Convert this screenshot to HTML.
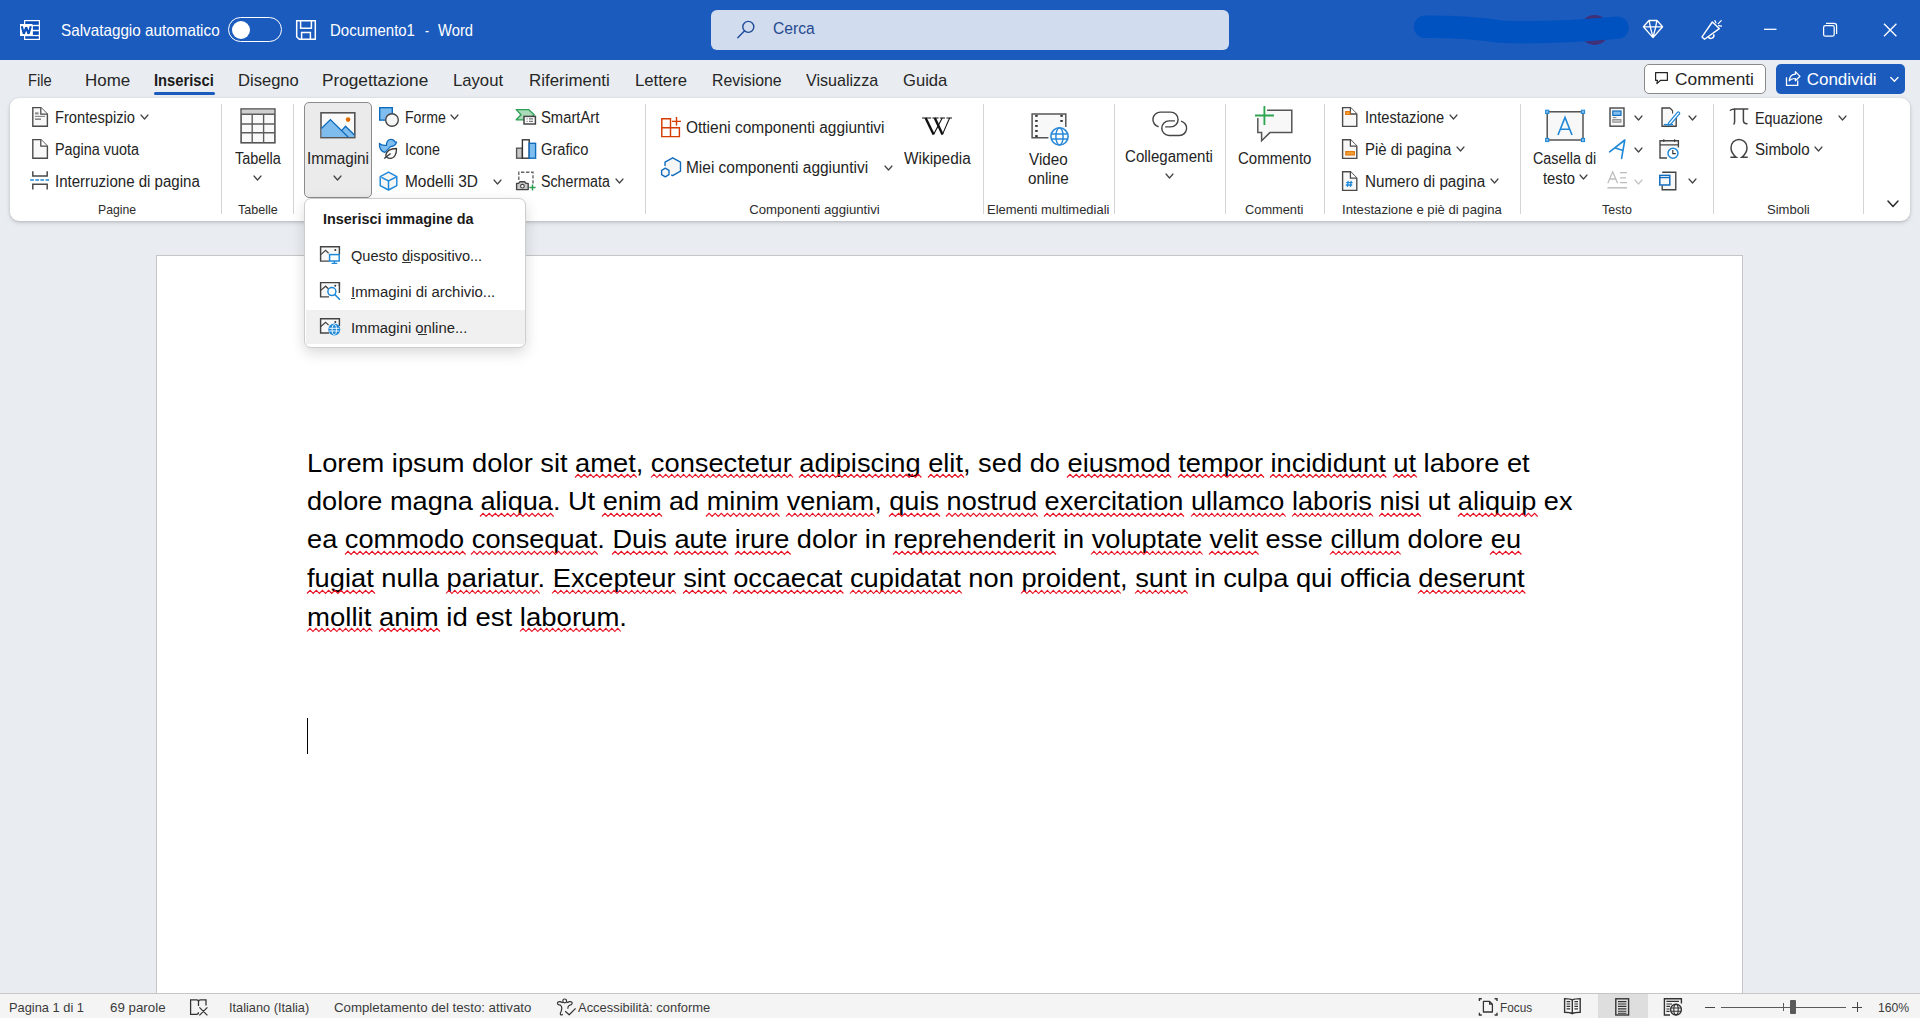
<!DOCTYPE html><html><head><meta charset="utf-8"><style>
html,body{margin:0;padding:0;width:1920px;height:1018px;overflow:hidden;background:#e9edf1}
body{position:relative;font-family:"Liberation Sans",sans-serif}
.t{position:absolute;white-space:pre;line-height:1;transform-origin:0 0}
svg{overflow:visible}
</style></head><body>
<div style="position:absolute;left:0px;top:0px;width:1920px;height:60px;background:#1b5bbe"></div>
<div style="position:absolute;left:0px;top:60px;width:1920px;height:933px;background:#e9edf1"></div>
<div style="position:absolute;left:156px;top:255px;width:1587px;height:760px;background:#fff;border:1px solid #c6c6c6;border-bottom:none;box-sizing:border-box"></div>
<div style="position:absolute;left:10px;top:98px;width:1900px;height:123px;background:#fff;border-radius:9px;box-shadow:0 1px 3px rgba(0,0,0,0.18),0 2px 6px rgba(0,0,0,0.08)"></div>
<div style="position:absolute;left:0px;top:993px;width:1920px;height:25px;background:#f4f4f4;border-top:1px solid #c8c6c4;box-sizing:border-box"></div>
<div class="t" style="left:61.00px;top:22.23px;font-size:16.5px;color:#ffffff;transform:scaleX(0.9248);">Salvataggio automatico</div>
<div class="t" style="left:330.00px;top:22.03px;font-size:16.5px;color:#ffffff;transform:scaleX(0.9081);">Documento1</div>
<div class="t" style="left:425.00px;top:22.03px;font-size:16.5px;color:#ffffff;transform:scaleX(0.7273);">-</div>
<div class="t" style="left:438.00px;top:22.03px;font-size:16.5px;color:#ffffff;transform:scaleX(0.8951);">Word</div>
<div style="position:absolute;left:228px;top:17px;width:54px;height:25px;border:1.5px solid #fff;border-radius:13px;box-sizing:border-box"></div>
<div style="position:absolute;left:232px;top:20.5px;width:18px;height:18px;background:#fff;border-radius:50%"></div>
<div style="position:absolute;left:711px;top:10px;width:518px;height:40px;background:#d1dcee;border-radius:6px"></div>
<div class="t" style="left:772.50px;top:21.28px;font-size:16.8px;color:#24498f;transform:scaleX(0.9310);">Cerca</div>
<div class="t" style="left:27.60px;top:72.21px;font-size:17px;color:#262626;transform:scaleX(0.8631);">File</div>
<div class="t" style="left:84.60px;top:72.21px;font-size:17px;color:#262626;transform:scaleX(0.9956);">Home</div>
<div class="t" style="left:154.20px;top:72.21px;font-size:17px;color:#1a1a1a;transform:scaleX(0.8667);font-weight:bold;">Inserisci</div>
<div class="t" style="left:237.50px;top:72.21px;font-size:17px;color:#262626;transform:scaleX(0.9744);">Disegno</div>
<div class="t" style="left:322.30px;top:72.21px;font-size:17px;color:#262626;transform:scaleX(1.0124);">Progettazione</div>
<div class="t" style="left:452.50px;top:72.21px;font-size:17px;color:#262626;transform:scaleX(0.9804);">Layout</div>
<div class="t" style="left:528.70px;top:72.21px;font-size:17px;color:#262626;transform:scaleX(0.9938);">Riferimenti</div>
<div class="t" style="left:634.60px;top:72.21px;font-size:17px;color:#262626;transform:scaleX(0.9830);">Lettere</div>
<div class="t" style="left:711.60px;top:72.21px;font-size:17px;color:#262626;transform:scaleX(0.9330);">Revisione</div>
<div class="t" style="left:806.40px;top:72.21px;font-size:17px;color:#262626;transform:scaleX(0.9463);">Visualizza</div>
<div class="t" style="left:903.00px;top:72.21px;font-size:17px;color:#262626;transform:scaleX(0.9780);">Guida</div>
<div style="position:absolute;left:154px;top:92px;width:61px;height:3px;background:#1b5bbe;border-radius:2px"></div>
<div style="position:absolute;left:1644px;top:64px;width:122px;height:30px;background:#fff;border:1px solid #8a8a8a;border-radius:5px;box-sizing:border-box"></div>
<div class="t" style="left:1674.60px;top:71.41px;font-size:17px;color:#242424;transform:scaleX(1.0194);">Commenti</div>
<div style="position:absolute;left:1776px;top:64px;width:129px;height:30px;background:#1b5bbe;border-radius:5px"></div>
<div class="t" style="left:1806.70px;top:71.41px;font-size:17px;color:#ffffff;">Condividi</div>
<div style="position:absolute;left:221px;top:104px;width:1px;height:110px;background:#d4d4d4"></div>
<div style="position:absolute;left:293px;top:104px;width:1px;height:110px;background:#d4d4d4"></div>
<div style="position:absolute;left:645px;top:104px;width:1px;height:110px;background:#d4d4d4"></div>
<div style="position:absolute;left:983px;top:104px;width:1px;height:110px;background:#d4d4d4"></div>
<div style="position:absolute;left:1114px;top:104px;width:1px;height:110px;background:#d4d4d4"></div>
<div style="position:absolute;left:1225px;top:104px;width:1px;height:110px;background:#d4d4d4"></div>
<div style="position:absolute;left:1324px;top:104px;width:1px;height:110px;background:#d4d4d4"></div>
<div style="position:absolute;left:1520px;top:104px;width:1px;height:110px;background:#d4d4d4"></div>
<div style="position:absolute;left:1713px;top:104px;width:1px;height:110px;background:#d4d4d4"></div>
<div style="position:absolute;left:1863px;top:104px;width:1px;height:110px;background:#d4d4d4"></div>
<div class="t" style="left:98.40px;top:202.93px;font-size:13.2px;color:#2c2c2c;transform:scaleX(0.9270);">Pagine</div>
<div class="t" style="left:237.80px;top:202.93px;font-size:13.2px;color:#2c2c2c;transform:scaleX(0.9498);">Tabelle</div>
<div class="t" style="left:749.20px;top:202.93px;font-size:13.2px;color:#2c2c2c;">Componenti aggiuntivi</div>
<div class="t" style="left:987.30px;top:202.93px;font-size:13.2px;color:#2c2c2c;transform:scaleX(0.9824);">Elementi multimediali</div>
<div class="t" style="left:1245.20px;top:202.93px;font-size:13.2px;color:#2c2c2c;transform:scaleX(0.9717);">Commenti</div>
<div class="t" style="left:1342.30px;top:202.93px;font-size:13.2px;color:#2c2c2c;transform:scaleX(0.9950);">Intestazione e piè di pagina</div>
<div class="t" style="left:1601.70px;top:202.93px;font-size:13.2px;color:#2c2c2c;transform:scaleX(0.9460);">Testo</div>
<div class="t" style="left:1767.00px;top:202.93px;font-size:13.2px;color:#2c2c2c;transform:scaleX(0.9885);">Simboli</div>
<div class="t" style="left:55.40px;top:110.39px;font-size:15.6px;color:#242424;transform:scaleX(0.9424);">Frontespizio</div>
<svg style="position:absolute;left:140.0px;top:113.5px" width="9" height="6" viewBox="0 0 9 6" fill="none"><path d="M1 1 L4.5 5 L8 1" stroke="#424242" stroke-width="1.2" stroke-linecap="round" stroke-linejoin="round"/></svg>
<div class="t" style="left:55.40px;top:141.99px;font-size:15.6px;color:#242424;transform:scaleX(0.9232);">Pagina vuota</div>
<div class="t" style="left:55.40px;top:174.39px;font-size:15.6px;color:#242424;transform:scaleX(0.9654);">Interruzione di pagina</div>
<div class="t" style="left:234.50px;top:150.99px;font-size:15.6px;color:#242424;transform:scaleX(0.9273);">Tabella</div>
<svg style="position:absolute;left:253.0px;top:174.5px" width="9" height="6" viewBox="0 0 9 6" fill="none"><path d="M1 1 L4.5 5 L8 1" stroke="#424242" stroke-width="1.2" stroke-linecap="round" stroke-linejoin="round"/></svg>
<div style="position:absolute;left:304px;top:102px;width:68px;height:96px;background:#ebebeb;border:1px solid #8c8c8c;border-radius:5px;box-sizing:border-box"></div>
<div class="t" style="left:306.60px;top:150.99px;font-size:15.6px;color:#242424;transform:scaleX(0.9795);">Immagini</div>
<svg style="position:absolute;left:333.0px;top:174.5px" width="9" height="6" viewBox="0 0 9 6" fill="none"><path d="M1 1 L4.5 5 L8 1" stroke="#424242" stroke-width="1.2" stroke-linecap="round" stroke-linejoin="round"/></svg>
<div class="t" style="left:404.70px;top:110.39px;font-size:15.6px;color:#242424;transform:scaleX(0.9047);">Forme</div>
<svg style="position:absolute;left:450.3px;top:113.8px" width="9" height="6" viewBox="0 0 9 6" fill="none"><path d="M1 1 L4.5 5 L8 1" stroke="#424242" stroke-width="1.2" stroke-linecap="round" stroke-linejoin="round"/></svg>
<div class="t" style="left:404.70px;top:142.09px;font-size:15.6px;color:#242424;transform:scaleX(0.9162);">Icone</div>
<div class="t" style="left:404.70px;top:173.69px;font-size:15.6px;color:#242424;transform:scaleX(0.9891);">Modelli 3D</div>
<svg style="position:absolute;left:493.0px;top:178.7px" width="9" height="6" viewBox="0 0 9 6" fill="none"><path d="M1 1 L4.5 5 L8 1" stroke="#424242" stroke-width="1.2" stroke-linecap="round" stroke-linejoin="round"/></svg>
<div class="t" style="left:541.40px;top:110.39px;font-size:15.6px;color:#242424;transform:scaleX(0.9480);">SmartArt</div>
<div class="t" style="left:541.40px;top:142.09px;font-size:15.6px;color:#242424;transform:scaleX(0.9423);">Grafico</div>
<div class="t" style="left:541.40px;top:173.69px;font-size:15.6px;color:#242424;transform:scaleX(0.9126);">Schermata</div>
<svg style="position:absolute;left:615.1px;top:177.7px" width="9" height="6" viewBox="0 0 9 6" fill="none"><path d="M1 1 L4.5 5 L8 1" stroke="#424242" stroke-width="1.2" stroke-linecap="round" stroke-linejoin="round"/></svg>
<div class="t" style="left:686.30px;top:120.29px;font-size:15.6px;color:#242424;transform:scaleX(0.9915);">Ottieni componenti aggiuntivi</div>
<div class="t" style="left:686.30px;top:160.19px;font-size:15.6px;color:#242424;transform:scaleX(0.9908);">Miei componenti aggiuntivi</div>
<svg style="position:absolute;left:884.0px;top:164.8px" width="9" height="6" viewBox="0 0 9 6" fill="none"><path d="M1 1 L4.5 5 L8 1" stroke="#424242" stroke-width="1.2" stroke-linecap="round" stroke-linejoin="round"/></svg>
<div class="t" style="left:903.80px;top:151.19px;font-size:15.6px;color:#242424;transform:scaleX(0.9867);">Wikipedia</div>
<div class="t" style="left:1029.20px;top:151.59px;font-size:15.6px;color:#242424;transform:scaleX(0.9773);">Video</div>
<div class="t" style="left:1028.30px;top:171.29px;font-size:15.6px;color:#242424;transform:scaleX(0.9784);">online</div>
<div class="t" style="left:1125.30px;top:148.99px;font-size:15.6px;color:#242424;transform:scaleX(0.9660);">Collegamenti</div>
<svg style="position:absolute;left:1165.0px;top:172.5px" width="9" height="6" viewBox="0 0 9 6" fill="none"><path d="M1 1 L4.5 5 L8 1" stroke="#424242" stroke-width="1.2" stroke-linecap="round" stroke-linejoin="round"/></svg>
<div class="t" style="left:1237.90px;top:151.19px;font-size:15.6px;color:#242424;transform:scaleX(0.9633);">Commento</div>
<div class="t" style="left:1365.40px;top:110.29px;font-size:15.6px;color:#242424;transform:scaleX(0.9417);">Intestazione</div>
<svg style="position:absolute;left:1449.1px;top:113.5px" width="9" height="6" viewBox="0 0 9 6" fill="none"><path d="M1 1 L4.5 5 L8 1" stroke="#424242" stroke-width="1.2" stroke-linecap="round" stroke-linejoin="round"/></svg>
<div class="t" style="left:1365.40px;top:141.99px;font-size:15.6px;color:#242424;transform:scaleX(0.9568);">Piè di pagina</div>
<svg style="position:absolute;left:1455.9px;top:145.5px" width="9" height="6" viewBox="0 0 9 6" fill="none"><path d="M1 1 L4.5 5 L8 1" stroke="#424242" stroke-width="1.2" stroke-linecap="round" stroke-linejoin="round"/></svg>
<div class="t" style="left:1365.40px;top:173.89px;font-size:15.6px;color:#242424;transform:scaleX(0.9756);">Numero di pagina</div>
<svg style="position:absolute;left:1490.1px;top:177.5px" width="9" height="6" viewBox="0 0 9 6" fill="none"><path d="M1 1 L4.5 5 L8 1" stroke="#424242" stroke-width="1.2" stroke-linecap="round" stroke-linejoin="round"/></svg>
<div class="t" style="left:1532.90px;top:150.89px;font-size:15.6px;color:#242424;transform:scaleX(0.9212);">Casella di</div>
<div class="t" style="left:1542.50px;top:171.14px;font-size:15.6px;color:#242424;transform:scaleX(0.9497);">testo</div>
<svg style="position:absolute;left:1578.8px;top:174.0px" width="9" height="6" viewBox="0 0 9 6" fill="none"><path d="M1 1 L4.5 5 L8 1" stroke="#424242" stroke-width="1.2" stroke-linecap="round" stroke-linejoin="round"/></svg>
<svg style="position:absolute;left:1633.8px;top:114.5px" width="9" height="6" viewBox="0 0 9 6" fill="none"><path d="M1 1 L4.5 5 L8 1" stroke="#424242" stroke-width="1.2" stroke-linecap="round" stroke-linejoin="round"/></svg>
<svg style="position:absolute;left:1633.8px;top:146.5px" width="9" height="6" viewBox="0 0 9 6" fill="none"><path d="M1 1 L4.5 5 L8 1" stroke="#424242" stroke-width="1.2" stroke-linecap="round" stroke-linejoin="round"/></svg>
<svg style="position:absolute;left:1633.8px;top:178.5px" width="9" height="6" viewBox="0 0 9 6" fill="none"><path d="M1 1 L4.5 5 L8 1" stroke="#c4c4c4" stroke-width="1.2" stroke-linecap="round" stroke-linejoin="round"/></svg>
<svg style="position:absolute;left:1688.0px;top:114.5px" width="9" height="6" viewBox="0 0 9 6" fill="none"><path d="M1 1 L4.5 5 L8 1" stroke="#424242" stroke-width="1.2" stroke-linecap="round" stroke-linejoin="round"/></svg>
<svg style="position:absolute;left:1688.0px;top:178.0px" width="9" height="6" viewBox="0 0 9 6" fill="none"><path d="M1 1 L4.5 5 L8 1" stroke="#424242" stroke-width="1.2" stroke-linecap="round" stroke-linejoin="round"/></svg>
<div class="t" style="left:1754.70px;top:110.59px;font-size:15.6px;color:#242424;transform:scaleX(0.9186);">Equazione</div>
<svg style="position:absolute;left:1838.0px;top:114.6px" width="9" height="6" viewBox="0 0 9 6" fill="none"><path d="M1 1 L4.5 5 L8 1" stroke="#424242" stroke-width="1.2" stroke-linecap="round" stroke-linejoin="round"/></svg>
<div class="t" style="left:1754.70px;top:142.19px;font-size:15.6px;color:#242424;transform:scaleX(0.9699);">Simbolo</div>
<svg style="position:absolute;left:1814.1px;top:145.6px" width="9" height="6" viewBox="0 0 9 6" fill="none"><path d="M1 1 L4.5 5 L8 1" stroke="#424242" stroke-width="1.2" stroke-linecap="round" stroke-linejoin="round"/></svg>
<svg style="position:absolute;left:1886.5px;top:200.25px" width="12" height="7.5" viewBox="0 0 12 7.5" fill="none"><path d="M1 1 L6.0 6.5 L11 1" stroke="#303030" stroke-width="1.6" stroke-linecap="round" stroke-linejoin="round"/></svg>
<svg style="position:absolute;left:0;top:0" width="1920" height="1018"><rect x="24" y="20" width="16" height="20" fill="#fff"/><rect x="25.2" y="21.2" width="13.6" height="3.6" fill="#0a50b8"/><rect x="32.8" y="26.2" width="6" height="3.6" fill="#0a50b8"/><rect x="32.8" y="31.3" width="6" height="3.6" fill="#0a50b8"/><rect x="25.2" y="36.2" width="13.6" height="2.6" fill="#0a50b8"/><rect x="20" y="24" width="12.4" height="12" fill="#fff"/><path d="M21.8 26.2 L23.8 33.8 L26.2 27.5 L28.6 33.8 L30.8 26.2" stroke="#0a50b8" stroke-width="2.18" stroke-linejoin="bevel" fill="none"/><path d="M296.7 20.7 H315.3 V39.3 H299.3 L296.7 36.8 Z M300.6 20.7 V28.2 H311.4 V20.7 M301.6 39.3 V32.6 H310.4 V39.3" stroke="#fff" stroke-width="1.49" fill="none"/><circle cx="748.3" cy="26.9" r="5.5" stroke="#1f4b99" stroke-width="1.38" fill="none"/><path d="M744.6 30.8 L737.8 37.8" stroke="#1f4b99" stroke-width="1.38" stroke-linecap="round"/><circle cx="1594.5" cy="30" r="15" fill="#403078"/><path d="M1425 26.8 C1455 26.6 1475 27.5 1500 31.6 C1530 33.2 1575 31.5 1617.5 27.7" stroke="#0052c0" stroke-width="22.4" stroke-linecap="round" fill="none"/><path d="M1649 20.5 H1657 L1662.6 26.8 L1653 37.6 L1643.4 26.8 Z M1643.6 26.8 H1662.4 M1649.2 20.8 L1650.3 26.8 L1653 37.3 L1655.7 26.8 L1656.8 20.8" stroke="#fff" stroke-width="1.32" stroke-linejoin="round" fill="none"/><path d="M1702 36.9 L1712.3 22 L1719.3 28.6 L1704.5 39.2 Z" stroke="#fff" stroke-width="1.38" stroke-linejoin="round" fill="none"/><path d="M1708.2 36.6 A2.7 2.7 0 0 0 1713.6 34.2" stroke="#fff" stroke-width="1.38" fill="none"/><path d="M1714.9 20.6 L1715.8 22.8 M1718.3 23.6 L1721.2 20.6 M1718.6 25.7 L1721.5 26.2" stroke="#fff" stroke-width="1.26" stroke-linecap="round"/><path d="M1764 29.3 H1776.5" stroke="#fff" stroke-width="1.26"/><rect x="1823.6" y="25.6" width="10.6" height="10.6" rx="1.8" stroke="#fff" stroke-width="1.26" fill="none"/><path d="M1826 23.4 H1834 Q1836.6 23.4 1836.6 26 V34" stroke="#fff" stroke-width="1.26" fill="none"/><path d="M1884 23.8 L1896.4 36.2 M1896.4 23.8 L1884 36.2" stroke="#fff" stroke-width="1.32"/><path d="M1655.6 72.6 H1667.4 V80.3 H1660.6 L1656.9 83.6 L1657.5 80.3 H1655.6 Z" stroke="#242424" stroke-width="1.21" stroke-linejoin="round" fill="none"/><path d="M1786.5 77.2 V85.3 H1797.7 V80.6" stroke="#fff" stroke-width="1.26" fill="none"/><path d="M1789.2 80.8 C1789.8 76.6 1791.8 74.2 1795.4 74.2 V71.6 L1800 76.3 L1795.4 80.8 V78.5 C1793 78.5 1790.8 79.2 1789.2 80.8 Z" stroke="#fff" stroke-width="1.21" stroke-linejoin="round" fill="none"/><path d="M1890.8 77.6 L1894.4 81.2 L1898 77.6" stroke="#fff" stroke-width="1.38" fill="none" stroke-linecap="round"/><path d="M32.8 107.6 H40.8 L47.4 114.19999999999999 V126.19999999999999 H32.8 Z" stroke="#4a4a4a" stroke-width="1.38" fill="#f8f8f8" stroke-linejoin="miter"/><path d="M40.8 107.6 V114.19999999999999 H47.4" stroke="#4a4a4a" stroke-width="1.26" fill="#fff"/><path d="M35 113.4 H38.6" stroke="#8a8a8a" stroke-width="2.07"/><path d="M35 116.4 H45" stroke="#8a8a8a" stroke-width="1.15"/><path d="M35 119.2 H41" stroke="#8a8a8a" stroke-width="1.61"/><path d="M32.8 139.6 H40.8 L47.4 146.2 V158.2 H32.8 Z" stroke="#4a4a4a" stroke-width="1.38" fill="#f8f8f8" stroke-linejoin="miter"/><path d="M40.8 139.6 V146.2 H47.4" stroke="#4a4a4a" stroke-width="1.26" fill="#fff"/><path d="M32.8 171.2 V176 H47.2 V171.2 M32.8 189.6 V184.3 H47.2 V189.6" stroke="#4a4a4a" stroke-width="1.49" fill="none"/><path d="M30.2 180 H49" stroke="#1e88d8" stroke-width="1.49" stroke-dasharray="3.7 1.4"/><rect x="241.1" y="109" width="33.8" height="33.8" fill="#f9f9f9" stroke="#555" stroke-width="1.61"/><rect x="241.8" y="109.7" width="32.4" height="4.4" fill="#cfcfcf"/><path d="M241 114.2 H275 M241 124 H275 M241 132.8 H275 M252.2 114.2 V143 M263.6 114.2 V143" stroke="#5d5d5d" stroke-width="1.38"/><rect x="321" y="112.8" width="33.8" height="24.8" fill="#fafafa" stroke="#555" stroke-width="1.61"/><path d="M321.6 128.3 L330.4 119.6 L341.6 130.8 L345.5 126.3 L354.2 135 V137 H321.6 Z" fill="#80bdef"/><path d="M321.4 128.5 L330.4 119.6 L348.3 137.3 M341.6 130.6 L345.5 126.3 L354.4 135" stroke="#0f6cbd" stroke-width="1.38" fill="none"/><circle cx="348.1" cy="119.6" r="2.3" fill="#e06c00"/><rect x="379.7" y="107.7" width="12.6" height="12.4" fill="#80bdef" stroke="#0f6cbd" stroke-width="1.38"/><circle cx="392" cy="120" r="6.3" fill="#f6f6f6" stroke="#444" stroke-width="1.38"/><path d="M379.4 143.4 C380.6 145 382.6 145.6 386.6 145.3 C386.1 142 388.1 139.4 391 139.4 C393 139.4 394.3 140.5 394.8 141.8 L396.6 142.2 C396 144.6 393.6 146.3 390.6 146.6 L384.8 152.4 C381.2 151.4 379.3 148.2 379.4 143.4 Z" fill="#80bdef" stroke="#0f6cbd" stroke-width="1.3" stroke-linejoin="round"/><path d="M385.8 155.2 C386.4 151.2 390.6 148.6 396.5 148.5 C396.7 154 394.5 158.3 390.3 158.3 C387.7 158.3 385.6 157.1 385.8 155.2 Z M384.2 158.6 L390.6 153.4" stroke="#3a3a3a" stroke-width="1.3" fill="#fafafa" stroke-linejoin="round"/><path d="M388.5 172.2 L396.8 176.6 V185.6 L388.5 190 L380.2 185.6 V176.6 Z" fill="#f6f6f6" stroke="#1e88d8" stroke-width="1.44" stroke-linejoin="round"/><path d="M381.5 177.3 L388.5 181 L396.6 176.8 M388.5 181 V189.8" stroke="#1e88d8" stroke-width="1.44" fill="none"/><path d="M516.2 109.6 H528.6 L534.2 114.8 L529 119.8 H516.2 L521 114.8 Z" fill="#a9dbb8" stroke="#2f9e55" stroke-width="1.32" stroke-linejoin="round"/><rect x="524" y="116.4" width="11.4" height="7.6" fill="#fff" stroke="#444" stroke-width="1.49"/><path d="M526.6 118.8 H527.6 M529 118.8 H533 M526.6 121.4 H527.6 M529 121.4 H533" stroke="#777" stroke-width="1.15"/><rect x="516.6" y="148.2" width="5.8" height="10" fill="#c9c9c9" stroke="#555" stroke-width="1.38"/><rect x="522.4" y="139.8" width="6.8" height="18.4" fill="#fff" stroke="#333" stroke-width="1.38"/><rect x="529.2" y="143.3" width="6.4" height="14.9" fill="#80bdef" stroke="#0f6cbd" stroke-width="1.38"/><path d="M518.8 180 V172.2 H533 V184" stroke="#666" stroke-width="1.38" stroke-dasharray="3.4 1.6" fill="none"/><path d="M516.6 183.4 H518.6 L519.8 181.8 H524.8 L526 183.4 H528.2 V189.6 H516.6 Z" fill="#c9c9c9" stroke="#444" stroke-width="1.38" stroke-linejoin="round"/><circle cx="522.4" cy="186.2" r="1.8" fill="#fff" stroke="#444" stroke-width="1.15"/><path d="M529.4 187.6 H535.6 M532.5 184.6 V190.6" stroke="#2f9e55" stroke-width="1.49"/><path d="M661.8 118.8 H670.5 V136.6 H661.8 Z M661.8 127.7 H679.4 V136.6 H670.5" stroke="#d83b01" stroke-width="1.44" fill="none"/><path d="M672 121.4 H681 M676.5 117 V125.6" stroke="#d83b01" stroke-width="1.44"/><path d="M665 166 V162.2 L672.7 157.8 L680.5 162.2 V171.2 L672.7 175.6 L671.2 174.8" stroke="#0f6cbd" stroke-width="1.38" fill="#f6f6f6" stroke-linejoin="round"/><path d="M665.3 168.2 L669 170.3 V174.6 L665.3 176.8 L661.6 174.6 V170.3 Z" stroke="#0f6cbd" stroke-width="1.38" fill="#f6f6f6" stroke-linejoin="round"/><path d="M1048.4 137.8 H1032.1 V113.9 H1065.8 V127" stroke="#555" stroke-width="1.49" fill="#f8f8f8"/><rect x="1035.2" y="114.89999999999999" width="2.5" height="1.9" fill="#333"/><rect x="1035.2" y="120.0" width="2.5" height="1.9" fill="#333"/><rect x="1035.2" y="125.0" width="2.5" height="1.9" fill="#333"/><rect x="1035.2" y="130.0" width="2.5" height="1.9" fill="#333"/><rect x="1035.2" y="135.1" width="2.5" height="1.9" fill="#333"/><rect x="1060.3" y="114.89999999999999" width="2.5" height="1.9" fill="#333"/><rect x="1060.3" y="120.0" width="2.5" height="1.9" fill="#333"/><circle cx="1059.5" cy="136.4" r="8.6" fill="#fff" stroke="#2b88d8" stroke-width="1.61"/><ellipse cx="1059.5" cy="136.4" rx="3.6" ry="8.6" fill="none" stroke="#2b88d8" stroke-width="1.49"/><path d="M1051.2 133.9 H1067.8 M1051.2 139 H1067.8" stroke="#2b88d8" stroke-width="1.49"/><path d="M1165.2 126.9 H1170.7 A7.4 7.4 0 0 0 1170.7 112.1 H1160.4 A7.4 7.4 0 0 0 1158.6 126.7" stroke="#444" stroke-width="1.44" fill="none"/><path d="M1174.9 120.9 H1169.1 A7.3 7.3 0 0 0 1169.1 135.5 H1179.4 A7.3 7.3 0 0 0 1181 121.1" stroke="#444" stroke-width="1.44" fill="none"/><path d="M1267.1 110.3 H1291.8 V132.6 H1269.9 L1261.6 140.8 V132.6 H1257.8 V118" stroke="#555" stroke-width="1.49" fill="#f8f8f8" stroke-linejoin="miter"/><path d="M1255 115.5 H1274 M1264.4 106 V125" stroke="#2ea550" stroke-width="1.84"/><path d="M1342.6 107.6 H1350.3999999999999 L1356.8 114.0 V126.39999999999999 H1342.6 Z" stroke="#4a4a4a" stroke-width="1.38" fill="#f8f8f8" stroke-linejoin="miter"/><path d="M1350.3999999999999 107.6 V114.0 H1356.8" stroke="#4a4a4a" stroke-width="1.26" fill="#fff"/><rect x="1345.6" y="111.6" width="4.4" height="2.8" fill="#f0a33a" stroke="#e07000" stroke-width="1.03"/><path d="M1342.6 139.8 H1350.3999999999999 L1356.8 146.20000000000002 V158.4 H1342.6 Z" stroke="#4a4a4a" stroke-width="1.38" fill="#f8f8f8" stroke-linejoin="miter"/><path d="M1350.3999999999999 139.8 V146.20000000000002 H1356.8" stroke="#4a4a4a" stroke-width="1.26" fill="#fff"/><rect x="1345.8" y="151.6" width="8.6" height="3.4" fill="#f0a33a" stroke="#e07000" stroke-width="1.03"/><path d="M1342.6 171.8 H1350.3999999999999 L1356.8 178.20000000000002 V190.4 H1342.6 Z" stroke="#4a4a4a" stroke-width="1.38" fill="#f8f8f8" stroke-linejoin="miter"/><path d="M1350.3999999999999 171.8 V178.20000000000002 H1356.8" stroke="#4a4a4a" stroke-width="1.26" fill="#fff"/><path d="M1348.2 180.8 L1347.4 186.8 M1351.2 180.8 L1350.4 186.8 M1346.2 182.6 H1352.6 M1345.8 185 H1352.2" stroke="#1e88d8" stroke-width="1.26"/><rect x="1547.2" y="111.8" width="35.8" height="28.2" fill="#f8f8f8" stroke="#444" stroke-width="1.38"/><path d="M1558 135 L1565 117.5 L1572 135 M1560.6 129.2 H1569.4" stroke="#1e88d8" stroke-width="1.61" fill="none"/><rect x="1545.6000000000001" y="110.2" width="3.2" height="3.2" fill="#80bdef" stroke="#1e88d8" stroke-width="1.03"/><rect x="1581.4" y="110.2" width="3.2" height="3.2" fill="#80bdef" stroke="#1e88d8" stroke-width="1.03"/><rect x="1545.6000000000001" y="138.4" width="3.2" height="3.2" fill="#80bdef" stroke="#1e88d8" stroke-width="1.03"/><rect x="1581.4" y="138.4" width="3.2" height="3.2" fill="#80bdef" stroke="#1e88d8" stroke-width="1.03"/><rect x="1610" y="108" width="14" height="18.2" fill="#f8f8f8" stroke="#444" stroke-width="1.38"/><rect x="1612.8" y="111" width="8.2" height="4.4" fill="#80bdef" stroke="#0f6cbd" stroke-width="1.15"/><path d="M1612.8 117.6 H1616.4" stroke="#888" stroke-width="1.03"/><rect x="1612.8" y="119.6" width="8.2" height="2.6" fill="#c6c6c6" stroke="#8a8a8a" stroke-width="0.92"/><path d="M1609.6 151.8 L1624.8 140 L1621.6 158.4 M1614.6 147.8 L1623 150.6" stroke="#1e88d8" stroke-width="1.61" stroke-linecap="round" stroke-linejoin="round" fill="none"/><path d="M1607.8 183.2 L1612.7 171.8 L1617.6 183.2 M1609.6 179 H1615.8" stroke="#bdbdbd" stroke-width="1.26" fill="none"/><path d="M1620 172.6 H1627 M1620 177.8 H1626 M1620 182.7 H1627" stroke="#bdbdbd" stroke-width="1.26"/><path d="M1607.4 187.8 H1627" stroke="#c4c4c4" stroke-width="1.72"/><path d="M1670 108 H1662 V126.2 H1676.2 V118" stroke="#444" stroke-width="1.38" fill="#f8f8f8"/><path d="M1670 108 L1672.6 110.8 V113.4" stroke="#444" stroke-width="1.15" fill="none"/><path d="M1668.6 122.8 L1677.4 112.4 A1.3 1.3 0 0 1 1679.3 114.2 L1670.6 124.4 L1668 125.1 Z" stroke="#1e88d8" stroke-width="1.26" fill="#fff" stroke-linejoin="round"/><path d="M1663.8 124.6 H1673" stroke="#1e88d8" stroke-width="1.38"/><path d="M1667 158 H1660 V140.8 H1678.4 V147.5" stroke="#444" stroke-width="1.38" fill="#f8f8f8"/><path d="M1660 144.8 H1678.4 M1663.8 139.2 V142 M1674.6 139.2 V142" stroke="#444" stroke-width="1.26"/><circle cx="1673" cy="153.2" r="5" fill="#fff" stroke="#1e88d8" stroke-width="1.49"/><path d="M1672.8 150 V153.6 H1675.8" stroke="#333" stroke-width="1.15" fill="none"/><path d="M1662.2 172.2 H1675.8 V189.8 H1662.2 V185.6" stroke="#444" stroke-width="1.38" fill="#f8f8f8"/><rect x="1659.8" y="175.4" width="10" height="9.6" fill="#f8f8f8" stroke="#0f6cbd" stroke-width="1.49"/><path d="M1659.8 177.6 H1669.8" stroke="#0f6cbd" stroke-width="1.26"/><path d="M1730.4 110.2 Q1731.8 108.9 1735 108.9 H1747.8 M1734.6 109 V121.4 Q1734.6 123.2 1734 123.9 M1743.4 109 V120.6 Q1743.4 123.7 1747 123.8" stroke="#444" stroke-width="1.49" fill="none" stroke-linecap="round"/><path d="M1730.4 157.3 H1736.3 Q1731 153.2 1731 147.8 A8 8.4 0 0 1 1747 147.8 Q1747 153.2 1741.7 157.3 H1747.7" stroke="#444" stroke-width="1.49" fill="none"/></svg>
<svg style="position:absolute;left:0;top:0" width="1920" height="1018"><g stroke="#111" fill="none"><path d="M925.6 117.9 L933.6 134.4" stroke-width="2.4"/><path d="M933.6 134.4 L942.2 118" stroke-width="1.1"/><path d="M934.8 117.9 L942.5 134.4" stroke-width="2.4"/><path d="M942.5 134.4 L949.6 118" stroke-width="1.1"/><path d="M922 118 H931.2 M932.4 118 H938.6 M939.8 118 H945 M946.4 118 H952" stroke-width="1.2"/></g></svg>
<div class="t" style="left:307.00px;top:450.81px;font-size:25.5px;color:#000000;transform:scaleX(1.0689);">Lorem ipsum dolor sit amet, consectetur adipiscing elit, sed do eiusmod tempor incididunt ut labore et</div>
<svg style="position:absolute;left:574.82px;top:474.3px" width="61.79" height="4" viewBox="0 0 61.79 4" fill="none"><polyline points="0.00,3.5 3.09,0.3 6.18,3.5 9.27,0.3 12.36,3.5 15.45,0.3 18.54,3.5 21.63,0.3 24.72,3.5 27.81,0.3 30.90,3.5 33.99,0.3 37.08,3.5 40.17,0.3 43.26,3.5 46.35,0.3 49.44,3.5 52.53,0.3 55.62,3.5 58.70,0.3 61.79,3.5" stroke="#e81123" stroke-width="1.1" fill="none"/></svg>
<svg style="position:absolute;left:650.56px;top:474.3px" width="142.1" height="4" viewBox="0 0 142.1 4" fill="none"><polyline points="0.00,3.5 2.96,0.3 5.92,3.5 8.88,0.3 11.84,3.5 14.80,0.3 17.76,3.5 20.72,0.3 23.68,3.5 26.64,0.3 29.60,3.5 32.56,0.3 35.52,3.5 38.49,0.3 41.45,3.5 44.41,0.3 47.37,3.5 50.33,0.3 53.29,3.5 56.25,0.3 59.21,3.5 62.17,0.3 65.13,3.5 68.09,0.3 71.05,3.5 74.01,0.3 76.97,3.5 79.93,0.3 82.89,3.5 85.85,0.3 88.81,3.5 91.77,0.3 94.73,3.5 97.69,0.3 100.65,3.5 103.61,0.3 106.57,3.5 109.53,0.3 112.49,3.5 115.46,0.3 118.42,3.5 121.38,0.3 124.34,3.5 127.30,0.3 130.26,3.5 133.22,0.3 136.18,3.5 139.14,0.3 142.10,3.5" stroke="#e81123" stroke-width="1.1" fill="none"/></svg>
<svg style="position:absolute;left:799.03px;top:474.3px" width="122.42" height="4" viewBox="0 0 122.42 4" fill="none"><polyline points="0.00,3.5 3.06,0.3 6.12,3.5 9.18,0.3 12.24,3.5 15.30,0.3 18.36,3.5 21.42,0.3 24.48,3.5 27.54,0.3 30.60,3.5 33.66,0.3 36.72,3.5 39.79,0.3 42.85,3.5 45.91,0.3 48.97,3.5 52.03,0.3 55.09,3.5 58.15,0.3 61.21,3.5 64.27,0.3 67.33,3.5 70.39,0.3 73.45,3.5 76.51,0.3 79.57,3.5 82.63,0.3 85.69,3.5 88.75,0.3 91.81,3.5 94.87,0.3 97.93,3.5 100.99,0.3 104.05,3.5 107.11,0.3 110.17,3.5 113.23,0.3 116.30,3.5 119.36,0.3 122.42,3.5" stroke="#e81123" stroke-width="1.1" fill="none"/></svg>
<svg style="position:absolute;left:927.82px;top:474.3px" width="36.04" height="4" viewBox="0 0 36.04 4" fill="none"><polyline points="0.00,3.5 3.00,0.3 6.01,3.5 9.01,0.3 12.01,3.5 15.02,0.3 18.02,3.5 21.02,0.3 24.03,3.5 27.03,0.3 30.04,3.5 33.04,0.3 36.04,3.5" stroke="#e81123" stroke-width="1.1" fill="none"/></svg>
<svg style="position:absolute;left:1067.21px;top:474.3px" width="104.22" height="4" viewBox="0 0 104.22 4" fill="none"><polyline points="0.00,3.5 3.07,0.3 6.13,3.5 9.20,0.3 12.26,3.5 15.33,0.3 18.39,3.5 21.46,0.3 24.52,3.5 27.59,0.3 30.65,3.5 33.72,0.3 36.78,3.5 39.85,0.3 42.92,3.5 45.98,0.3 49.05,3.5 52.11,0.3 55.18,3.5 58.24,0.3 61.31,3.5 64.37,0.3 67.44,3.5 70.50,0.3 73.57,3.5 76.63,0.3 79.70,3.5 82.77,0.3 85.83,3.5 88.90,0.3 91.96,3.5 95.03,0.3 98.09,3.5 101.16,0.3 104.22,3.5" stroke="#e81123" stroke-width="1.1" fill="none"/></svg>
<svg style="position:absolute;left:1177.81px;top:474.3px" width="86.03" height="4" viewBox="0 0 86.03 4" fill="none"><polyline points="0.00,3.5 3.07,0.3 6.15,3.5 9.22,0.3 12.29,3.5 15.36,0.3 18.44,3.5 21.51,0.3 24.58,3.5 27.65,0.3 30.73,3.5 33.80,0.3 36.87,3.5 39.94,0.3 43.02,3.5 46.09,0.3 49.16,3.5 52.23,0.3 55.31,3.5 58.38,0.3 61.45,3.5 64.52,0.3 67.60,3.5 70.67,0.3 73.74,3.5 76.81,0.3 79.89,3.5 82.96,0.3 86.03,3.5" stroke="#e81123" stroke-width="1.1" fill="none"/></svg>
<svg style="position:absolute;left:1270.21px;top:474.3px" width="116.36" height="4" viewBox="0 0 116.36 4" fill="none"><polyline points="0.00,3.5 3.06,0.3 6.12,3.5 9.19,0.3 12.25,3.5 15.31,0.3 18.37,3.5 21.43,0.3 24.50,3.5 27.56,0.3 30.62,3.5 33.68,0.3 36.75,3.5 39.81,0.3 42.87,3.5 45.93,0.3 48.99,3.5 52.06,0.3 55.12,3.5 58.18,0.3 61.24,3.5 64.30,0.3 67.37,3.5 70.43,0.3 73.49,3.5 76.55,0.3 79.61,3.5 82.68,0.3 85.74,3.5 88.80,0.3 91.86,3.5 94.93,0.3 97.99,3.5 101.05,0.3 104.11,3.5 107.17,0.3 110.24,3.5 113.30,0.3 116.36,3.5" stroke="#e81123" stroke-width="1.1" fill="none"/></svg>
<svg style="position:absolute;left:1392.94px;top:474.3px" width="23.93" height="4" viewBox="0 0 23.93 4" fill="none"><polyline points="0.00,3.5 2.99,0.3 5.98,3.5 8.97,0.3 11.97,3.5 14.96,0.3 17.95,3.5 20.94,0.3 23.93,3.5" stroke="#e81123" stroke-width="1.1" fill="none"/></svg>
<div class="t" style="left:307.00px;top:489.11px;font-size:25.5px;color:#000000;transform:scaleX(1.0642);">dolore magna aliqua. Ut enim ad minim veniam, quis nostrud exercitation ullamco laboris nisi ut aliquip ex</div>
<svg style="position:absolute;left:480.18px;top:512.6px" width="73.62" height="4" viewBox="0 0 73.62 4" fill="none"><polyline points="0.00,3.5 3.07,0.3 6.14,3.5 9.20,0.3 12.27,3.5 15.34,0.3 18.41,3.5 21.47,0.3 24.54,3.5 27.61,0.3 30.68,3.5 33.74,0.3 36.81,3.5 39.88,0.3 42.95,3.5 46.01,0.3 49.08,3.5 52.15,0.3 55.22,3.5 58.28,0.3 61.35,3.5 64.42,0.3 67.49,3.5 70.56,0.3 73.62,3.5" stroke="#e81123" stroke-width="1.1" fill="none"/></svg>
<svg style="position:absolute;left:602.35px;top:512.6px" width="60.02" height="4" viewBox="0 0 60.02 4" fill="none"><polyline points="0.00,3.5 3.00,0.3 6.00,3.5 9.00,0.3 12.00,3.5 15.00,0.3 18.00,3.5 21.01,0.3 24.01,3.5 27.01,0.3 30.01,3.5 33.01,0.3 36.01,3.5 39.01,0.3 42.01,3.5 45.01,0.3 48.01,3.5 51.01,0.3 54.01,3.5 57.02,0.3 60.02,3.5" stroke="#e81123" stroke-width="1.1" fill="none"/></svg>
<svg style="position:absolute;left:706.43px;top:512.6px" width="73.56" height="4" viewBox="0 0 73.56 4" fill="none"><polyline points="0.00,3.5 3.06,0.3 6.13,3.5 9.19,0.3 12.26,3.5 15.32,0.3 18.39,3.5 21.45,0.3 24.52,3.5 27.58,0.3 30.65,3.5 33.71,0.3 36.78,3.5 39.84,0.3 42.91,3.5 45.97,0.3 49.04,3.5 52.10,0.3 55.17,3.5 58.23,0.3 61.30,3.5 64.36,0.3 67.43,3.5 70.49,0.3 73.56,3.5" stroke="#e81123" stroke-width="1.1" fill="none"/></svg>
<svg style="position:absolute;left:786.33px;top:512.6px" width="88.68" height="4" viewBox="0 0 88.68 4" fill="none"><polyline points="0.00,3.5 2.96,0.3 5.91,3.5 8.87,0.3 11.82,3.5 14.78,0.3 17.74,3.5 20.69,0.3 23.65,3.5 26.60,0.3 29.56,3.5 32.51,0.3 35.47,3.5 38.43,0.3 41.38,3.5 44.34,0.3 47.29,3.5 50.25,0.3 53.21,3.5 56.16,0.3 59.12,3.5 62.07,0.3 65.03,3.5 67.98,0.3 70.94,3.5 73.90,0.3 76.85,3.5 79.81,0.3 82.76,3.5 85.72,0.3 88.68,3.5" stroke="#e81123" stroke-width="1.1" fill="none"/></svg>
<svg style="position:absolute;left:888.88px;top:512.6px" width="50.98" height="4" viewBox="0 0 50.98 4" fill="none"><polyline points="0.00,3.5 3.19,0.3 6.37,3.5 9.56,0.3 12.74,3.5 15.93,0.3 19.12,3.5 22.30,0.3 25.49,3.5 28.68,0.3 31.86,3.5 35.05,0.3 38.23,3.5 41.42,0.3 44.61,3.5 47.79,0.3 50.98,3.5" stroke="#e81123" stroke-width="1.1" fill="none"/></svg>
<svg style="position:absolute;left:946.2px;top:512.6px" width="91.71" height="4" viewBox="0 0 91.71 4" fill="none"><polyline points="0.00,3.5 3.06,0.3 6.11,3.5 9.17,0.3 12.23,3.5 15.28,0.3 18.34,3.5 21.40,0.3 24.46,3.5 27.51,0.3 30.57,3.5 33.63,0.3 36.68,3.5 39.74,0.3 42.80,3.5 45.85,0.3 48.91,3.5 51.97,0.3 55.03,3.5 58.08,0.3 61.14,3.5 64.20,0.3 67.25,3.5 70.31,0.3 73.37,3.5 76.42,0.3 79.48,3.5 82.54,0.3 85.59,3.5 88.65,0.3 91.71,3.5" stroke="#e81123" stroke-width="1.1" fill="none"/></svg>
<svg style="position:absolute;left:1044.25px;top:512.6px" width="139.96" height="4" viewBox="0 0 139.96 4" fill="none"><polyline points="0.00,3.5 3.04,0.3 6.09,3.5 9.13,0.3 12.17,3.5 15.21,0.3 18.26,3.5 21.30,0.3 24.34,3.5 27.38,0.3 30.43,3.5 33.47,0.3 36.51,3.5 39.56,0.3 42.60,3.5 45.64,0.3 48.68,3.5 51.73,0.3 54.77,3.5 57.81,0.3 60.85,3.5 63.90,0.3 66.94,3.5 69.98,0.3 73.03,3.5 76.07,0.3 79.11,3.5 82.15,0.3 85.20,3.5 88.24,0.3 91.28,3.5 94.32,0.3 97.37,3.5 100.41,0.3 103.45,3.5 106.50,0.3 109.54,3.5 112.58,0.3 115.62,3.5 118.67,0.3 121.71,3.5 124.75,0.3 127.79,3.5 130.84,0.3 133.88,3.5 136.92,0.3 139.96,3.5" stroke="#e81123" stroke-width="1.1" fill="none"/></svg>
<svg style="position:absolute;left:1190.55px;top:512.6px" width="94.7" height="4" viewBox="0 0 94.7 4" fill="none"><polyline points="0.00,3.5 2.96,0.3 5.92,3.5 8.88,0.3 11.84,3.5 14.80,0.3 17.76,3.5 20.72,0.3 23.68,3.5 26.64,0.3 29.60,3.5 32.55,0.3 35.51,3.5 38.47,0.3 41.43,3.5 44.39,0.3 47.35,3.5 50.31,0.3 53.27,3.5 56.23,0.3 59.19,3.5 62.15,0.3 65.11,3.5 68.07,0.3 71.03,3.5 73.99,0.3 76.95,3.5 79.91,0.3 82.87,3.5 85.83,0.3 88.79,3.5 91.75,0.3 94.70,3.5" stroke="#e81123" stroke-width="1.1" fill="none"/></svg>
<svg style="position:absolute;left:1291.6px;top:512.6px" width="81.14" height="4" viewBox="0 0 81.14 4" fill="none"><polyline points="0.00,3.5 2.90,0.3 5.80,3.5 8.69,0.3 11.59,3.5 14.49,0.3 17.39,3.5 20.28,0.3 23.18,3.5 26.08,0.3 28.98,3.5 31.88,0.3 34.77,3.5 37.67,0.3 40.57,3.5 43.47,0.3 46.36,3.5 49.26,0.3 52.16,3.5 55.06,0.3 57.95,3.5 60.85,0.3 63.75,3.5 66.65,0.3 69.55,3.5 72.44,0.3 75.34,3.5 78.24,0.3 81.14,3.5" stroke="#e81123" stroke-width="1.1" fill="none"/></svg>
<svg style="position:absolute;left:1379.07px;top:512.6px" width="41.92" height="4" viewBox="0 0 41.92 4" fill="none"><polyline points="0.00,3.5 2.99,0.3 5.99,3.5 8.98,0.3 11.98,3.5 14.97,0.3 17.96,3.5 20.96,0.3 23.95,3.5 26.95,0.3 29.94,3.5 32.94,0.3 35.93,3.5 38.92,0.3 41.92,3.5" stroke="#e81123" stroke-width="1.1" fill="none"/></svg>
<svg style="position:absolute;left:1457.5px;top:512.6px" width="79.65" height="4" viewBox="0 0 79.65 4" fill="none"><polyline points="0.00,3.5 3.06,0.3 6.13,3.5 9.19,0.3 12.25,3.5 15.32,0.3 18.38,3.5 21.44,0.3 24.51,3.5 27.57,0.3 30.64,3.5 33.70,0.3 36.76,3.5 39.83,0.3 42.89,3.5 45.95,0.3 49.02,3.5 52.08,0.3 55.14,3.5 58.21,0.3 61.27,3.5 64.33,0.3 67.40,3.5 70.46,0.3 73.52,3.5 76.59,0.3 79.65,3.5" stroke="#e81123" stroke-width="1.1" fill="none"/></svg>
<div class="t" style="left:307.00px;top:527.21px;font-size:25.5px;color:#000000;transform:scaleX(1.0666);">ea commodo consequat. Duis aute irure dolor in reprehenderit in voluptate velit esse cillum dolore eu</div>
<svg style="position:absolute;left:344.51px;top:550.7px" width="120.62" height="4" viewBox="0 0 120.62 4" fill="none"><polyline points="0.00,3.5 3.02,0.3 6.03,3.5 9.05,0.3 12.06,3.5 15.08,0.3 18.09,3.5 21.11,0.3 24.12,3.5 27.14,0.3 30.15,3.5 33.17,0.3 36.18,3.5 39.20,0.3 42.22,3.5 45.23,0.3 48.25,3.5 51.26,0.3 54.28,3.5 57.29,0.3 60.31,3.5 63.32,0.3 66.34,3.5 69.35,0.3 72.37,3.5 75.38,0.3 78.40,3.5 81.42,0.3 84.43,3.5 87.45,0.3 90.46,3.5 93.48,0.3 96.49,3.5 99.51,0.3 102.52,3.5 105.54,0.3 108.55,3.5 111.57,0.3 114.58,3.5 117.60,0.3 120.62,3.5" stroke="#e81123" stroke-width="1.1" fill="none"/></svg>
<svg style="position:absolute;left:471.48px;top:550.7px" width="126.71" height="4" viewBox="0 0 126.71 4" fill="none"><polyline points="0.00,3.5 3.02,0.3 6.03,3.5 9.05,0.3 12.07,3.5 15.08,0.3 18.10,3.5 21.12,0.3 24.13,3.5 27.15,0.3 30.17,3.5 33.19,0.3 36.20,3.5 39.22,0.3 42.24,3.5 45.25,0.3 48.27,3.5 51.29,0.3 54.30,3.5 57.32,0.3 60.34,3.5 63.35,0.3 66.37,3.5 69.39,0.3 72.40,3.5 75.42,0.3 78.44,3.5 81.46,0.3 84.47,3.5 87.49,0.3 90.51,3.5 93.52,0.3 96.54,3.5 99.56,0.3 102.57,3.5 105.59,0.3 108.61,3.5 111.62,0.3 114.64,3.5 117.66,0.3 120.67,3.5 123.69,0.3 126.71,3.5" stroke="#e81123" stroke-width="1.1" fill="none"/></svg>
<svg style="position:absolute;left:612.1px;top:550.7px" width="55.61" height="4" viewBox="0 0 55.61 4" fill="none"><polyline points="0.00,3.5 3.09,0.3 6.18,3.5 9.27,0.3 12.36,3.5 15.45,0.3 18.54,3.5 21.63,0.3 24.72,3.5 27.80,0.3 30.89,3.5 33.98,0.3 37.07,3.5 40.16,0.3 43.25,3.5 46.34,0.3 49.43,3.5 52.52,0.3 55.61,3.5" stroke="#e81123" stroke-width="1.1" fill="none"/></svg>
<svg style="position:absolute;left:674.07px;top:550.7px" width="54.13" height="4" viewBox="0 0 54.13 4" fill="none"><polyline points="0.00,3.5 3.01,0.3 6.01,3.5 9.02,0.3 12.03,3.5 15.04,0.3 18.04,3.5 21.05,0.3 24.06,3.5 27.07,0.3 30.07,3.5 33.08,0.3 36.09,3.5 39.10,0.3 42.10,3.5 45.11,0.3 48.12,3.5 51.13,0.3 54.13,3.5" stroke="#e81123" stroke-width="1.1" fill="none"/></svg>
<svg style="position:absolute;left:734.56px;top:550.7px" width="55.61" height="4" viewBox="0 0 55.61 4" fill="none"><polyline points="0.00,3.5 3.09,0.3 6.18,3.5 9.27,0.3 12.36,3.5 15.45,0.3 18.54,3.5 21.63,0.3 24.72,3.5 27.80,0.3 30.89,3.5 33.98,0.3 37.07,3.5 40.16,0.3 43.25,3.5 46.34,0.3 49.43,3.5 52.52,0.3 55.61,3.5" stroke="#e81123" stroke-width="1.1" fill="none"/></svg>
<svg style="position:absolute;left:893.28px;top:550.7px" width="162.98" height="4" viewBox="0 0 162.98 4" fill="none"><polyline points="0.00,3.5 3.02,0.3 6.04,3.5 9.05,0.3 12.07,3.5 15.09,0.3 18.11,3.5 21.13,0.3 24.14,3.5 27.16,0.3 30.18,3.5 33.20,0.3 36.22,3.5 39.24,0.3 42.25,3.5 45.27,0.3 48.29,3.5 51.31,0.3 54.33,3.5 57.34,0.3 60.36,3.5 63.38,0.3 66.40,3.5 69.42,0.3 72.43,3.5 75.45,0.3 78.47,3.5 81.49,0.3 84.51,3.5 87.53,0.3 90.54,3.5 93.56,0.3 96.58,3.5 99.60,0.3 102.62,3.5 105.63,0.3 108.65,3.5 111.67,0.3 114.69,3.5 117.71,0.3 120.72,3.5 123.74,0.3 126.76,3.5 129.78,0.3 132.80,3.5 135.81,0.3 138.83,3.5 141.85,0.3 144.87,3.5 147.89,0.3 150.91,3.5 153.92,0.3 156.94,3.5 159.96,0.3 162.98,3.5" stroke="#e81123" stroke-width="1.1" fill="none"/></svg>
<svg style="position:absolute;left:1091.34px;top:550.7px" width="111.58" height="4" viewBox="0 0 111.58 4" fill="none"><polyline points="0.00,3.5 2.94,0.3 5.87,3.5 8.81,0.3 11.75,3.5 14.68,0.3 17.62,3.5 20.55,0.3 23.49,3.5 26.43,0.3 29.36,3.5 32.30,0.3 35.24,3.5 38.17,0.3 41.11,3.5 44.05,0.3 46.98,3.5 49.92,0.3 52.85,3.5 55.79,0.3 58.73,3.5 61.66,0.3 64.60,3.5 67.54,0.3 70.47,3.5 73.41,0.3 76.35,3.5 79.28,0.3 82.22,3.5 85.16,0.3 88.09,3.5 91.03,0.3 93.96,3.5 96.90,0.3 99.84,3.5 102.77,0.3 105.71,3.5 108.65,0.3 111.58,3.5" stroke="#e81123" stroke-width="1.1" fill="none"/></svg>
<svg style="position:absolute;left:1209.28px;top:550.7px" width="49.57" height="4" viewBox="0 0 49.57 4" fill="none"><polyline points="0.00,3.5 3.10,0.3 6.20,3.5 9.29,0.3 12.39,3.5 15.49,0.3 18.59,3.5 21.69,0.3 24.78,3.5 27.88,0.3 30.98,3.5 34.08,0.3 37.18,3.5 40.27,0.3 43.37,3.5 46.47,0.3 49.57,3.5" stroke="#e81123" stroke-width="1.1" fill="none"/></svg>
<svg style="position:absolute;left:1330.21px;top:550.7px" width="70.71" height="4" viewBox="0 0 70.71 4" fill="none"><polyline points="0.00,3.5 2.95,0.3 5.89,3.5 8.84,0.3 11.79,3.5 14.73,0.3 17.68,3.5 20.62,0.3 23.57,3.5 26.52,0.3 29.46,3.5 32.41,0.3 35.36,3.5 38.30,0.3 41.25,3.5 44.19,0.3 47.14,3.5 50.09,0.3 53.03,3.5 55.98,0.3 58.93,3.5 61.87,0.3 64.82,3.5 67.76,0.3 70.71,3.5" stroke="#e81123" stroke-width="1.1" fill="none"/></svg>
<svg style="position:absolute;left:1490.43px;top:550.7px" width="31.45" height="4" viewBox="0 0 31.45 4" fill="none"><polyline points="0.00,3.5 3.15,0.3 6.29,3.5 9.44,0.3 12.58,3.5 15.73,0.3 18.87,3.5 22.02,0.3 25.16,3.5 28.31,0.3 31.45,3.5" stroke="#e81123" stroke-width="1.1" fill="none"/></svg>
<div class="t" style="left:307.00px;top:566.01px;font-size:25.5px;color:#000000;transform:scaleX(1.0700);">fugiat nulla pariatur. Excepteur sint occaecat cupidatat non proident, sunt in culpa qui officia deserunt</div>
<svg style="position:absolute;left:306.7px;top:589.5px" width="67.94" height="4" viewBox="0 0 67.94 4" fill="none"><polyline points="0.00,3.5 3.09,0.3 6.18,3.5 9.26,0.3 12.35,3.5 15.44,0.3 18.53,3.5 21.62,0.3 24.71,3.5 27.79,0.3 30.88,3.5 33.97,0.3 37.06,3.5 40.15,0.3 43.24,3.5 46.32,0.3 49.41,3.5 52.50,0.3 55.59,3.5 58.68,0.3 61.77,3.5 64.85,0.3 67.94,3.5" stroke="#e81123" stroke-width="1.1" fill="none"/></svg>
<svg style="position:absolute;left:446.25px;top:589.5px" width="93.71" height="4" viewBox="0 0 93.71 4" fill="none"><polyline points="0.00,3.5 2.93,0.3 5.86,3.5 8.79,0.3 11.71,3.5 14.64,0.3 17.57,3.5 20.50,0.3 23.43,3.5 26.36,0.3 29.28,3.5 32.21,0.3 35.14,3.5 38.07,0.3 41.00,3.5 43.93,0.3 46.85,3.5 49.78,0.3 52.71,3.5 55.64,0.3 58.57,3.5 61.50,0.3 64.42,3.5 67.35,0.3 70.28,3.5 73.21,0.3 76.14,3.5 79.07,0.3 81.99,3.5 84.92,0.3 87.85,3.5 90.78,0.3 93.71,3.5" stroke="#e81123" stroke-width="1.1" fill="none"/></svg>
<svg style="position:absolute;left:552.41px;top:589.5px" width="124.04" height="4" viewBox="0 0 124.04 4" fill="none"><polyline points="0.00,3.5 2.95,0.3 5.91,3.5 8.86,0.3 11.81,3.5 14.77,0.3 17.72,3.5 20.67,0.3 23.63,3.5 26.58,0.3 29.53,3.5 32.49,0.3 35.44,3.5 38.39,0.3 41.35,3.5 44.30,0.3 47.25,3.5 50.21,0.3 53.16,3.5 56.11,0.3 59.07,3.5 62.02,0.3 64.97,3.5 67.93,0.3 70.88,3.5 73.83,0.3 76.79,3.5 79.74,0.3 82.69,3.5 85.65,0.3 88.60,3.5 91.55,0.3 94.51,3.5 97.46,0.3 100.41,3.5 103.37,0.3 106.32,3.5 109.27,0.3 112.23,3.5 115.18,0.3 118.13,3.5 121.09,0.3 124.04,3.5" stroke="#e81123" stroke-width="1.1" fill="none"/></svg>
<svg style="position:absolute;left:682.83px;top:589.5px" width="43.66" height="4" viewBox="0 0 43.66 4" fill="none"><polyline points="0.00,3.5 3.12,0.3 6.24,3.5 9.36,0.3 12.47,3.5 15.59,0.3 18.71,3.5 21.83,0.3 24.95,3.5 28.07,0.3 31.18,3.5 34.30,0.3 37.42,3.5 40.54,0.3 43.66,3.5" stroke="#e81123" stroke-width="1.1" fill="none"/></svg>
<svg style="position:absolute;left:732.87px;top:589.5px" width="110.4" height="4" viewBox="0 0 110.4 4" fill="none"><polyline points="0.00,3.5 3.07,0.3 6.13,3.5 9.20,0.3 12.27,3.5 15.33,0.3 18.40,3.5 21.47,0.3 24.53,3.5 27.60,0.3 30.67,3.5 33.73,0.3 36.80,3.5 39.87,0.3 42.93,3.5 46.00,0.3 49.07,3.5 52.13,0.3 55.20,3.5 58.27,0.3 61.33,3.5 64.40,0.3 67.47,3.5 70.53,0.3 73.60,3.5 76.67,0.3 79.73,3.5 82.80,0.3 85.87,3.5 88.93,0.3 92.00,3.5 95.07,0.3 98.13,3.5 101.20,0.3 104.27,3.5 107.33,0.3 110.40,3.5" stroke="#e81123" stroke-width="1.1" fill="none"/></svg>
<svg style="position:absolute;left:849.65px;top:589.5px" width="111.93" height="4" viewBox="0 0 111.93 4" fill="none"><polyline points="0.00,3.5 2.95,0.3 5.89,3.5 8.84,0.3 11.78,3.5 14.73,0.3 17.67,3.5 20.62,0.3 23.56,3.5 26.51,0.3 29.46,3.5 32.40,0.3 35.35,3.5 38.29,0.3 41.24,3.5 44.18,0.3 47.13,3.5 50.07,0.3 53.02,3.5 55.97,0.3 58.91,3.5 61.86,0.3 64.80,3.5 67.75,0.3 70.69,3.5 73.64,0.3 76.58,3.5 79.53,0.3 82.48,3.5 85.42,0.3 88.37,3.5 91.31,0.3 94.26,3.5 97.20,0.3 100.15,3.5 103.09,0.3 106.04,3.5 108.99,0.3 111.93,3.5" stroke="#e81123" stroke-width="1.1" fill="none"/></svg>
<svg style="position:absolute;left:1021.06px;top:589.5px" width="99.8" height="4" viewBox="0 0 99.8 4" fill="none"><polyline points="0.00,3.5 2.94,0.3 5.87,3.5 8.81,0.3 11.74,3.5 14.68,0.3 17.61,3.5 20.55,0.3 23.48,3.5 26.42,0.3 29.35,3.5 32.29,0.3 35.22,3.5 38.16,0.3 41.09,3.5 44.03,0.3 46.96,3.5 49.90,0.3 52.83,3.5 55.77,0.3 58.70,3.5 61.64,0.3 64.57,3.5 67.51,0.3 70.44,3.5 73.38,0.3 76.31,3.5 79.25,0.3 82.18,3.5 85.12,0.3 88.05,3.5 90.99,0.3 93.92,3.5 96.86,0.3 99.80,3.5" stroke="#e81123" stroke-width="1.1" fill="none"/></svg>
<svg style="position:absolute;left:1134.81px;top:589.5px" width="52.77" height="4" viewBox="0 0 52.77 4" fill="none"><polyline points="0.00,3.5 2.93,0.3 5.86,3.5 8.79,0.3 11.73,3.5 14.66,0.3 17.59,3.5 20.52,0.3 23.45,3.5 26.38,0.3 29.32,3.5 32.25,0.3 35.18,3.5 38.11,0.3 41.04,3.5 43.97,0.3 46.91,3.5 49.84,0.3 52.77,3.5" stroke="#e81123" stroke-width="1.1" fill="none"/></svg>
<svg style="position:absolute;left:1417.93px;top:589.5px" width="107.38" height="4" viewBox="0 0 107.38 4" fill="none"><polyline points="0.00,3.5 2.98,0.3 5.97,3.5 8.95,0.3 11.93,3.5 14.91,0.3 17.90,3.5 20.88,0.3 23.86,3.5 26.84,0.3 29.83,3.5 32.81,0.3 35.79,3.5 38.77,0.3 41.76,3.5 44.74,0.3 47.72,3.5 50.70,0.3 53.69,3.5 56.67,0.3 59.65,3.5 62.64,0.3 65.62,3.5 68.60,0.3 71.58,3.5 74.57,0.3 77.55,3.5 80.53,0.3 83.51,3.5 86.50,0.3 89.48,3.5 92.46,0.3 95.44,3.5 98.43,0.3 101.41,3.5 104.39,0.3 107.38,3.5" stroke="#e81123" stroke-width="1.1" fill="none"/></svg>
<div class="t" style="left:307.00px;top:604.91px;font-size:25.5px;color:#000000;transform:scaleX(1.0804);">mollit anim id est laborum.</div>
<svg style="position:absolute;left:306.7px;top:628.4px" width="65.49" height="4" viewBox="0 0 65.49 4" fill="none"><polyline points="0.00,3.5 2.98,0.3 5.95,3.5 8.93,0.3 11.91,3.5 14.88,0.3 17.86,3.5 20.84,0.3 23.81,3.5 26.79,0.3 29.77,3.5 32.74,0.3 35.72,3.5 38.70,0.3 41.67,3.5 44.65,0.3 47.63,3.5 50.60,0.3 53.58,3.5 56.56,0.3 59.53,3.5 62.51,0.3 65.49,3.5" stroke="#e81123" stroke-width="1.1" fill="none"/></svg>
<svg style="position:absolute;left:378.64px;top:628.4px" width="60.91" height="4" viewBox="0 0 60.91 4" fill="none"><polyline points="0.00,3.5 3.05,0.3 6.09,3.5 9.14,0.3 12.18,3.5 15.23,0.3 18.27,3.5 21.32,0.3 24.36,3.5 27.41,0.3 30.46,3.5 33.50,0.3 36.55,3.5 39.59,0.3 42.64,3.5 45.68,0.3 48.73,3.5 51.77,0.3 54.82,3.5 57.87,0.3 60.91,3.5" stroke="#e81123" stroke-width="1.1" fill="none"/></svg>
<svg style="position:absolute;left:519.5px;top:628.4px" width="100.73" height="4" viewBox="0 0 100.73 4" fill="none"><polyline points="0.00,3.5 2.96,0.3 5.93,3.5 8.89,0.3 11.85,3.5 14.81,0.3 17.78,3.5 20.74,0.3 23.70,3.5 26.66,0.3 29.63,3.5 32.59,0.3 35.55,3.5 38.51,0.3 41.48,3.5 44.44,0.3 47.40,3.5 50.36,0.3 53.33,3.5 56.29,0.3 59.25,3.5 62.21,0.3 65.18,3.5 68.14,0.3 71.10,3.5 74.06,0.3 77.03,3.5 79.99,0.3 82.95,3.5 85.91,0.3 88.88,3.5 91.84,0.3 94.80,3.5 97.76,0.3 100.73,3.5" stroke="#e81123" stroke-width="1.1" fill="none"/></svg>
<div style="position:absolute;left:307px;top:718px;width:1.3px;height:36px;background:#000"></div>
<div style="position:absolute;left:304px;top:198px;width:222px;height:149.5px;background:#fff;border:1px solid #cdcdcd;border-radius:7px;box-sizing:border-box;box-shadow:0 5px 14px rgba(0,0,0,0.15)"></div>
<div style="position:absolute;left:306px;top:310px;width:219px;height:34px;background:#f0f0f0"></div>
<div class="t" style="left:322.70px;top:211.82px;font-size:14.8px;color:#1a1a1a;transform:scaleX(0.9742);font-weight:bold;">Inserisci immagine da</div>
<div class="t" style="left:351.30px;top:248.18px;font-size:15.5px;color:#242424;transform:scaleX(0.9398);">Questo dispositivo...</div>
<div class="t" style="left:351.30px;top:284.28px;font-size:15.5px;color:#242424;transform:scaleX(0.9620);">Immagini di archivio...</div>
<div class="t" style="left:351.30px;top:320.48px;font-size:15.5px;color:#242424;transform:scaleX(0.9572);">Immagini online...</div>
<div style="position:absolute;left:402.4px;top:261.6px;width:8.6px;height:1.1px;background:#333"></div>
<div style="position:absolute;left:351.3px;top:297.8px;width:3.6px;height:1.1px;background:#333"></div>
<div style="position:absolute;left:418px;top:334px;width:8.7px;height:1.1px;background:#333"></div>
<svg style="position:absolute;left:0;top:0" width="1920" height="1018"><path d="M329 261.1 H320.6 V246.8 H339.4 V254" transform="translate(0 0.0)" stroke="#444" stroke-width="1.44" fill="#f8f8f8"/><path d="M320.8 254.6 L325.6 250.4 L328.6 253.2" transform="translate(0 0.0)" stroke="#444" stroke-width="1.26" fill="none"/><circle cx="335.3" cy="250.0" r="1" fill="#333"/><path d="M329 261.1 H320.6 V246.8 H339.4 V254" transform="translate(0 35.79999999999998)" stroke="#444" stroke-width="1.44" fill="#f8f8f8"/><path d="M320.8 254.6 L325.6 250.4 L328.6 253.2" transform="translate(0 35.79999999999998)" stroke="#444" stroke-width="1.26" fill="none"/><circle cx="335.3" cy="285.79999999999995" r="1" fill="#333"/><path d="M329 261.1 H320.6 V246.8 H339.4 V254" transform="translate(0 71.9)" stroke="#444" stroke-width="1.44" fill="#f8f8f8"/><path d="M320.8 254.6 L325.6 250.4 L328.6 253.2" transform="translate(0 71.9)" stroke="#444" stroke-width="1.26" fill="none"/><circle cx="335.3" cy="321.9" r="1" fill="#333"/><rect x="329.6" y="254.6" width="9.6" height="6.4" fill="#fff" stroke="#1e88d8" stroke-width="1.49"/><path d="M334.4 261 V263 M331.6 263.4 H337.2" stroke="#1e88d8" stroke-width="1.38"/><rect x="336" y="286" width="4.5" height="6" fill="#fff"/><path d="M339.4 282.6 V293" stroke="#444" stroke-width="1.38"/><circle cx="331.9" cy="291.6" r="4" fill="#fff" stroke="#1e88d8" stroke-width="1.49"/><path d="M334.8 294.5 L339.5 299.2" stroke="#1e88d8" stroke-width="1.61" stroke-linecap="round"/><circle cx="334.3" cy="329.6" r="6" fill="#1e88d8"/><ellipse cx="334.3" cy="329.6" rx="2.2" ry="5" fill="none" stroke="#fff" stroke-width="0.92"/><path d="M329.2 328.3 H339.4 M329.2 331 H339.4" stroke="#fff" stroke-width="0.92"/></svg>
<div class="t" style="left:9.40px;top:1001.17px;font-size:13.5px;color:#3b3b3b;transform:scaleX(0.9518);">Pagina 1 di 1</div>
<div class="t" style="left:110.00px;top:1001.17px;font-size:13.5px;color:#3b3b3b;transform:scaleX(0.9876);">69 parole</div>
<div class="t" style="left:229.20px;top:1001.17px;font-size:13.5px;color:#3b3b3b;transform:scaleX(0.9458);">Italiano (Italia)</div>
<div class="t" style="left:334.20px;top:1001.17px;font-size:13.5px;color:#3b3b3b;transform:scaleX(0.9811);">Completamento del testo: attivato</div>
<div class="t" style="left:578.30px;top:1001.17px;font-size:13.5px;color:#3b3b3b;transform:scaleX(0.9580);">Accessibilità: conforme</div>
<div class="t" style="left:1500.20px;top:1001.17px;font-size:13.5px;color:#3b3b3b;transform:scaleX(0.8750);">Focus</div>
<div style="position:absolute;left:1598px;top:994px;width:50px;height:24px;background:#dedede"></div>
<div class="t" style="left:1878.00px;top:1001.17px;font-size:13.5px;color:#3b3b3b;transform:scaleX(0.9043);">160%</div>
<div style="position:absolute;left:1721px;top:1006.5px;width:125px;height:1px;background:#5a5a5a"></div>
<div style="position:absolute;left:1783px;top:1003px;width:1px;height:8px;background:#5a5a5a"></div>
<div style="position:absolute;left:1790px;top:1000px;width:6px;height:14px;background:#5a5a5a;border-radius:1px"></div>
<div style="position:absolute;left:1705px;top:1006.5px;width:10px;height:1.2px;background:#444"></div>
<div style="position:absolute;left:1852px;top:1006.5px;width:10px;height:1.2px;background:#444"></div>
<div style="position:absolute;left:1856.5px;top:1002px;width:1.2px;height:10px;background:#444"></div>
<svg style="position:absolute;left:0;top:0" width="1920" height="1018"><path d="M198.5 1006 V1001.6 Q198.5 999.8 196.6 999.8 H190.6 V1014.4 H196.6 Q198.5 1014.4 198.5 1012.3 M198.5 1001.6 Q198.6 999.8 200.5 999.8 H206 V1005.6 M199.4 1007.4 L207.4 1015.4 M207.4 1007.4 L199.4 1015.4" stroke="#333" stroke-width="1.26" fill="none"/><circle cx="564.7" cy="1000.9" r="1.9" stroke="#333" stroke-width="1.15" fill="none"/><path d="M562.8 1002.6 L560 1001.6 Q557.6 1001.4 557.4 1003.3 Q557.6 1005 560.4 1005.2 Q562 1006 561.8 1008.5 Q561.4 1011.2 560.4 1013 Q560 1015.2 561.8 1015 L562.8 1014.2 M566.6 1002.6 L569.6 1001.6 Q572.2 1001.4 572.2 1003.3 Q572 1005 569.4 1005.3 Q567.8 1006 567.8 1008.8 M565.2 1011.2 L569.2 1014.8 L575.6 1008.4" stroke="#333" stroke-width="1.21" fill="none" stroke-linejoin="round"/><path d="M1479.4 1001 V998.8 H1481.8 M1494.6 998.8 H1497 V1001 M1497 1012.8 V1015 H1494.6 M1481.8 1015 H1479.4 V1012.8" stroke="#333" stroke-width="1.38" fill="none"/><path d="M1483.4 1001.4 H1489.6 L1492.4 1004.2 V1012 H1483.4 Z M1489.6 1001.4 V1004.2 H1492.4" stroke="#333" stroke-width="1.26" fill="none" stroke-linejoin="round"/><path d="M1572.3 1013.6 V1000 Q1570 998.6 1564.6 998.6 V1012.2 Q1570 1012.2 1572.3 1013.6 Q1574.6 1012.2 1580.2 1012.2 V998.6 Q1574.6 998.6 1572.3 1000" stroke="#333" stroke-width="1.38" fill="none"/><path d="M1566.6 1001.6 H1570.2 M1566.6 1004 H1570.2 M1566.6 1006.4 H1570.2 M1566.6 1008.8 H1570.2 M1574.4 1001.6 H1578 M1574.4 1004 H1578 M1574.4 1006.4 H1578 M1574.4 1008.8 H1578" stroke="#333" stroke-width="1.15"/><rect x="1615.8" y="998.8" width="12.8" height="16.2" fill="none" stroke="#333" stroke-width="1.38"/><path d="M1618 1001.6 H1626.4 M1618 1004 H1626.4 M1618 1006.4 H1626.4 M1618 1008.8 H1626.4 M1618 1011.2 H1626.4 M1618 1013.2 H1626.4" stroke="#333" stroke-width="1.15"/><path d="M1670 1015 H1664.4 V998.8 H1681.4 V1003.4" stroke="#333" stroke-width="1.38" fill="none"/><path d="M1666.4 1001.4 H1679 M1666.4 1004 H1672 M1666.4 1006.4 H1670 M1666.4 1009 H1669.6 M1666.4 1011.4 H1669.6" stroke="#333" stroke-width="1.15"/><circle cx="1676" cy="1009.6" r="5.4" fill="#f3f3f3" stroke="#333" stroke-width="1.38"/><ellipse cx="1676" cy="1009.6" rx="2.2" ry="5.2" fill="none" stroke="#333" stroke-width="1.15"/><path d="M1670.8 1008 H1681.2 M1670.8 1011.2 H1681.2" stroke="#333" stroke-width="1.15"/></svg>
</body></html>
